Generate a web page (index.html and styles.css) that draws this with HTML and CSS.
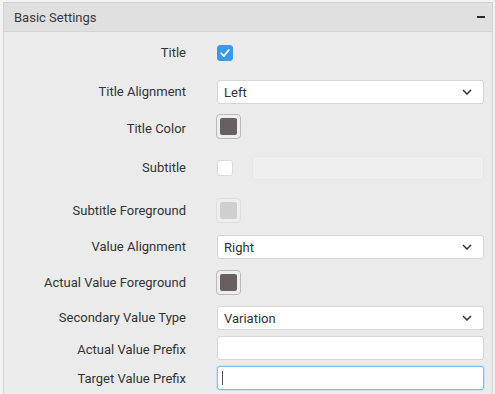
FILE: index.html
```html
<!DOCTYPE html>
<html>
<head>
<meta charset="utf-8">
<link rel="stylesheet" href="styles.css">
</head>
<body>
<div class="panel">
  <div class="header">
    <span class="header-title">Basic Settings</span>
    <span class="collapse"></span>
  </div>
  <div class="body">
    <div class="row r-title">
      <div class="label">Title</div>
      <div class="control">
        <span class="checkbox checked">
          <svg width="16" height="16" viewBox="0 0 16 16"><path d="M4.2 8.3 L6.9 11 L11.8 5" fill="none" stroke="#fff" stroke-width="1.8" stroke-linecap="round" stroke-linejoin="round"/></svg>
        </span>
      </div>
    </div>
    <div class="row r-talign">
      <div class="label">Title Alignment</div>
      <div class="control">
        <div class="select"><span>Left</span><svg class="chev" width="10" height="6" viewBox="0 0 10 6"><path d="M1 1 L5 5 L9 1" fill="none" stroke="#333" stroke-width="1.5"/></svg></div>
      </div>
    </div>
    <div class="row r-tcolor">
      <div class="label">Title Color</div>
      <div class="control">
        <span class="swatch"><span class="swatch-fill"></span></span>
      </div>
    </div>
    <div class="row r-sub">
      <div class="label">Subtitle</div>
      <div class="control split">
        <span class="checkbox"></span>
        <div class="input disabled"></div>
      </div>
    </div>
    <div class="row r-subfg">
      <div class="label">Subtitle Foreground</div>
      <div class="control">
        <span class="swatch off"><span class="swatch-fill"></span></span>
      </div>
    </div>
    <div class="row r-valign">
      <div class="label">Value Alignment</div>
      <div class="control">
        <div class="select"><span>Right</span><svg class="chev" width="10" height="6" viewBox="0 0 10 6"><path d="M1 1 L5 5 L9 1" fill="none" stroke="#333" stroke-width="1.5"/></svg></div>
      </div>
    </div>
    <div class="row r-avfg">
      <div class="label">Actual Value Foreground</div>
      <div class="control">
        <span class="swatch"><span class="swatch-fill"></span></span>
      </div>
    </div>
    <div class="row r-svt">
      <div class="label">Secondary Value Type</div>
      <div class="control">
        <div class="select"><span>Variation</span><svg class="chev" width="10" height="6" viewBox="0 0 10 6"><path d="M1 1 L5 5 L9 1" fill="none" stroke="#333" stroke-width="1.5"/></svg></div>
      </div>
    </div>
    <div class="row r-avp">
      <div class="label">Actual Value Prefix</div>
      <div class="control">
        <div class="input"></div>
      </div>
    </div>
    <div class="row r-tvp">
      <div class="label">Target Value Prefix</div>
      <div class="control">
        <div class="input focused"><span class="caret"></span></div>
      </div>
    </div>
  </div>
</div>
</body>
</html>
```

FILE: styles.css
```css
html, body {
  margin: 0;
  padding: 0;
  background: #f3f3f3;
  font-family: Roboto, "Liberation Sans", sans-serif;
  font-size: 13px;
  color: #333;
}

.panel {
  margin: 2px 2px 0 3px;
  border: 1px solid #d3d3d3;
  border-bottom: none;
  background: #ebebeb;
  height: 391px;
  overflow: hidden;
}

.header {
  height: 28px;
  background: #e0e0e0;
  border-bottom: 1px solid #d3d3d3;
  display: flex;
  align-items: center;
  justify-content: space-between;
  padding: 0 7px 0 10px;
}

.header-title {
  color: #3a3a3a;
  font-size: 13px;
}

.collapse {
  width: 8px;
  height: 2px;
  background: #2b2b2b;
}

.body {
  padding-right: 8px;
}

.row {
  display: flex;
  align-items: center;
}

.label {
  width: 182px;
  flex: none;
  text-align: right;
  line-height: 16px;
}

.control {
  margin-left: 30px;
  flex: 1;
  display: flex;
  align-items: center;
}

.r-title { margin-top: 12px; height: 17px; }
.r-talign { margin-top: 19px; height: 24px; }
.r-tcolor { margin-top: 10px; height: 25px; }
.r-sub { margin-top: 17px; height: 24px; }
.r-subfg { margin-top: 18px; height: 25px; }
.r-valign { margin-top: 12px; height: 24px; }
.r-avfg { margin-top: 11px; height: 25px; }
.r-svt { margin-top: 11px; height: 24px; }
.r-avp { margin-top: 6px; height: 24px; }
.r-tvp { margin-top: 6px; height: 24px; }

.r-avp .label { position: relative; top: 2px; }
.r-tvp .label { position: relative; top: 1px; }
.r-tcolor .label { position: relative; top: 2px; }

.checkbox {
  width: 16px;
  height: 16px;
  box-sizing: border-box;
  border-radius: 3px;
  background: #fff;
  border: 1px solid #dcdcdc;
  display: inline-flex;
  margin-left: 1px;
}

.checkbox.checked {
  background: #3a97f2;
  border-color: #3a97f2;
  align-items: center;
  justify-content: center;
}

.checkbox.checked svg {
  margin: -1px;
}

.select,
.input {
  flex: 1;
  height: 24px;
  box-sizing: border-box;
  background: #fff;
  border: 1px solid #d6d6d6;
  border-radius: 3px;
  display: flex;
  align-items: center;
  justify-content: space-between;
  padding: 0 11px 0 6px;
  margin-left: 1px;
}

.chev {
  display: block;
}

.split .input {
  margin-left: 19px;
}

.input.disabled {
  background: #efefef;
  border-color: #e6e6e6;
}

.input.focused {
  border-color: #7fbdf3;
  box-shadow: 0 0 0 1px #c7e1fa;
  justify-content: flex-start;
  padding-left: 4px;
}

.caret {
  width: 1px;
  height: 14px;
  background: #555;
}

.swatch {
  width: 25px;
  height: 25px;
  box-sizing: border-box;
  border: 1px solid #b9b9b9;
  border-radius: 4px;
  padding: 3px;
  background: #eeeeee;
  display: inline-flex;
}

.swatch-fill {
  flex: 1;
  border-radius: 2px;
  background: #686060;
}

.swatch.off {
  border-color: #dedede;
}

.swatch.off .swatch-fill {
  background: #cfcfcf;
}
```
